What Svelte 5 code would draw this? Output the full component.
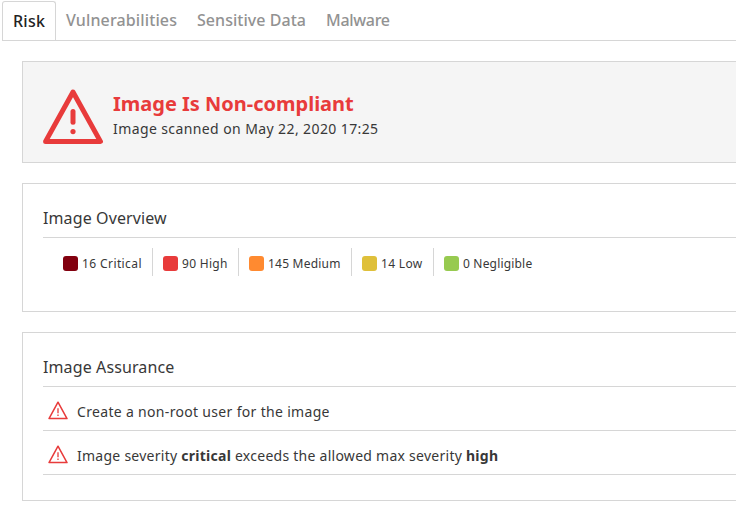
<script>
  const tabs = [
    { name: 'Risk', width: 54, spacing: 0.25 },
    { name: 'Vulnerabilities', width: 131, spacing: 0.13 },
    { name: 'Sensitive Data', width: 129, spacing: 0.04 },
    { name: 'Malware', width: 84, spacing: -0.3 },
  ];
  const severities = [
    { label: '16 Critical', color: '#82000f', width: 90, spacing: 0.4 },
    { label: '90 High', color: '#e83b3b', width: 86, spacing: 0.3 },
    { label: '145 Medium', color: '#ff8a30', width: 113, spacing: 0.22 },
    { label: '14 Low', color: '#dfc03a', width: 82, spacing: 0.33 },
    { label: '0 Negligible', color: '#97ca50', width: 110, spacing: 0.18 },
  ];
</script>

{#snippet warning(size)}
  {#if size === 'large'}
    <svg class="large" viewBox="0 0 60 56" width="60" height="56" fill="none" stroke="#e83b3b" stroke-linecap="round" stroke-linejoin="round">
      <path d="M30 3 L57.4 52.4 H2.6 Z" stroke-width="5" />
      <path d="M30 22.6 V33.2" stroke-width="5" />
      <circle cx="30" cy="42.6" r="2.6" fill="#e83b3b" stroke="none" />
    </svg>
  {:else}
    <svg viewBox="0 0 20 19" width="20" height="19" fill="none" stroke="#e83b3b" stroke-linejoin="round">
      <path d="M10 1.2 L19 17.6 H1 Z" stroke-width="1.5" />
      <path d="M10 7.3 V12.3 M10 13.5 V15" stroke-width="1.3" />
    </svg>
  {/if}
{/snippet}

<main>
  <nav>
    {#each tabs as tab, i}
      <div class="tab" class:active={i === 0} style="width: {tab.width}px; letter-spacing: {tab.spacing}px">{tab.name}</div>
    {/each}
  </nav>

  <section class="status">
    {@render warning('large')}
    <div class="message">
      <h1>Image Is Non-compliant</h1>
      <p>Image scanned on May 22, 2020 17:25</p>
    </div>
  </section>

  <section class="overview">
    <h2>Image Overview</h2>
    <div class="legend">
      {#each severities as item}
        <div class="severity" style="width: {item.width}px; letter-spacing: {item.spacing}px">
          <i style="background: {item.color}"></i><span>{item.label}</span>
        </div>
      {/each}
    </div>
  </section>

  <section class="assurance">
    <h2>Image Assurance</h2>
    <div class="row">{@render warning('small')}<span class="short">Create a non-root user for the image</span></div>
    <div class="row">{@render warning('small')}<span>Image severity <b>critical</b> exceeds the allowed max severity <b>high</b></span></div>
  </section>
</main>

<style>
  :global(body) { margin: 0; background: #fff; }
  main {
    box-sizing: border-box;
    width: 736px;
    height: 506px;
    overflow: hidden;
    font-family: 'Noto Sans', 'Open Sans', sans-serif;
    color: #383838;
    white-space: nowrap;
  }
  nav {
    box-sizing: border-box;
    display: flex;
    height: 41px;
    margin-left: 2px;
    padding-top: 1px;
    border-bottom: 1px solid #d6d6d6;
  }
  .tab {
    box-sizing: border-box;
    flex: none;
    height: 39px;
    padding-left: 10px;
    font-size: 16px;
    font-weight: 500;
    line-height: 39px;
    color: #929292;
  }
  .tab.active {
    height: 39px;
    border: 1px solid #d6d6d6;
    border-bottom: 0;
    border-radius: 3px 3px 0 0;
    background: #fff;
    color: #222;
  }
  section {
    box-sizing: border-box;
    margin: 20px 0 0 22px;
    padding-left: 20px;
    border: 1px solid #d6d6d6;
    border-right: 0;
  }
  .status {
    display: flex;
    height: 102px;
    background: #f5f5f5;
  }
  .large { flex: none; margin-top: 27px; }
  .message { margin: 30px 0 0 10px; }
  h1 {
    margin: 0;
    font-size: 20px;
    font-weight: 700;
    line-height: 24px;
    color: #e83b3b;
  }
  p { margin: 0; font-size: 14px; line-height: 26px; letter-spacing: 0.4px; }
  h2 {
    box-sizing: border-box;
    height: 54px;
    margin: 0;
    padding-top: 22px;
    border-bottom: 1px solid #d6d6d6;
    font-size: 16px;
    font-weight: 400;
    line-height: 24px;
    letter-spacing: 0.11px;
  }
  .overview { height: 129px; }
  .legend { display: flex; padding: 10px 0 0 20px; }
  .severity {
    box-sizing: border-box;
    display: flex;
    flex: none;
    align-items: center;
    height: 28px;
    padding-top: 3px;
    border-right: 1px solid #d6d6d6;
    font-size: 12px;
  }
  .severity + .severity { padding-left: 10px; }
  .severity:last-child { border-right: 0; }
  .severity i { flex: none; width: 15px; height: 15px; margin-right: 4px; border-radius: 3px; }
  .assurance { height: 169px; }
  .row {
    box-sizing: border-box;
    display: flex;
    align-items: center;
    height: 44px;
    padding: 4px 0 0 5px;
    border-bottom: 1px solid #d6d6d6;
    font-size: 14px;
  }
  .row svg { flex: none; margin-right: 9px; }
  .row span { padding-top: 2px; letter-spacing: 0.26px; }
  .row .short { letter-spacing: 0.32px; }
</style>
